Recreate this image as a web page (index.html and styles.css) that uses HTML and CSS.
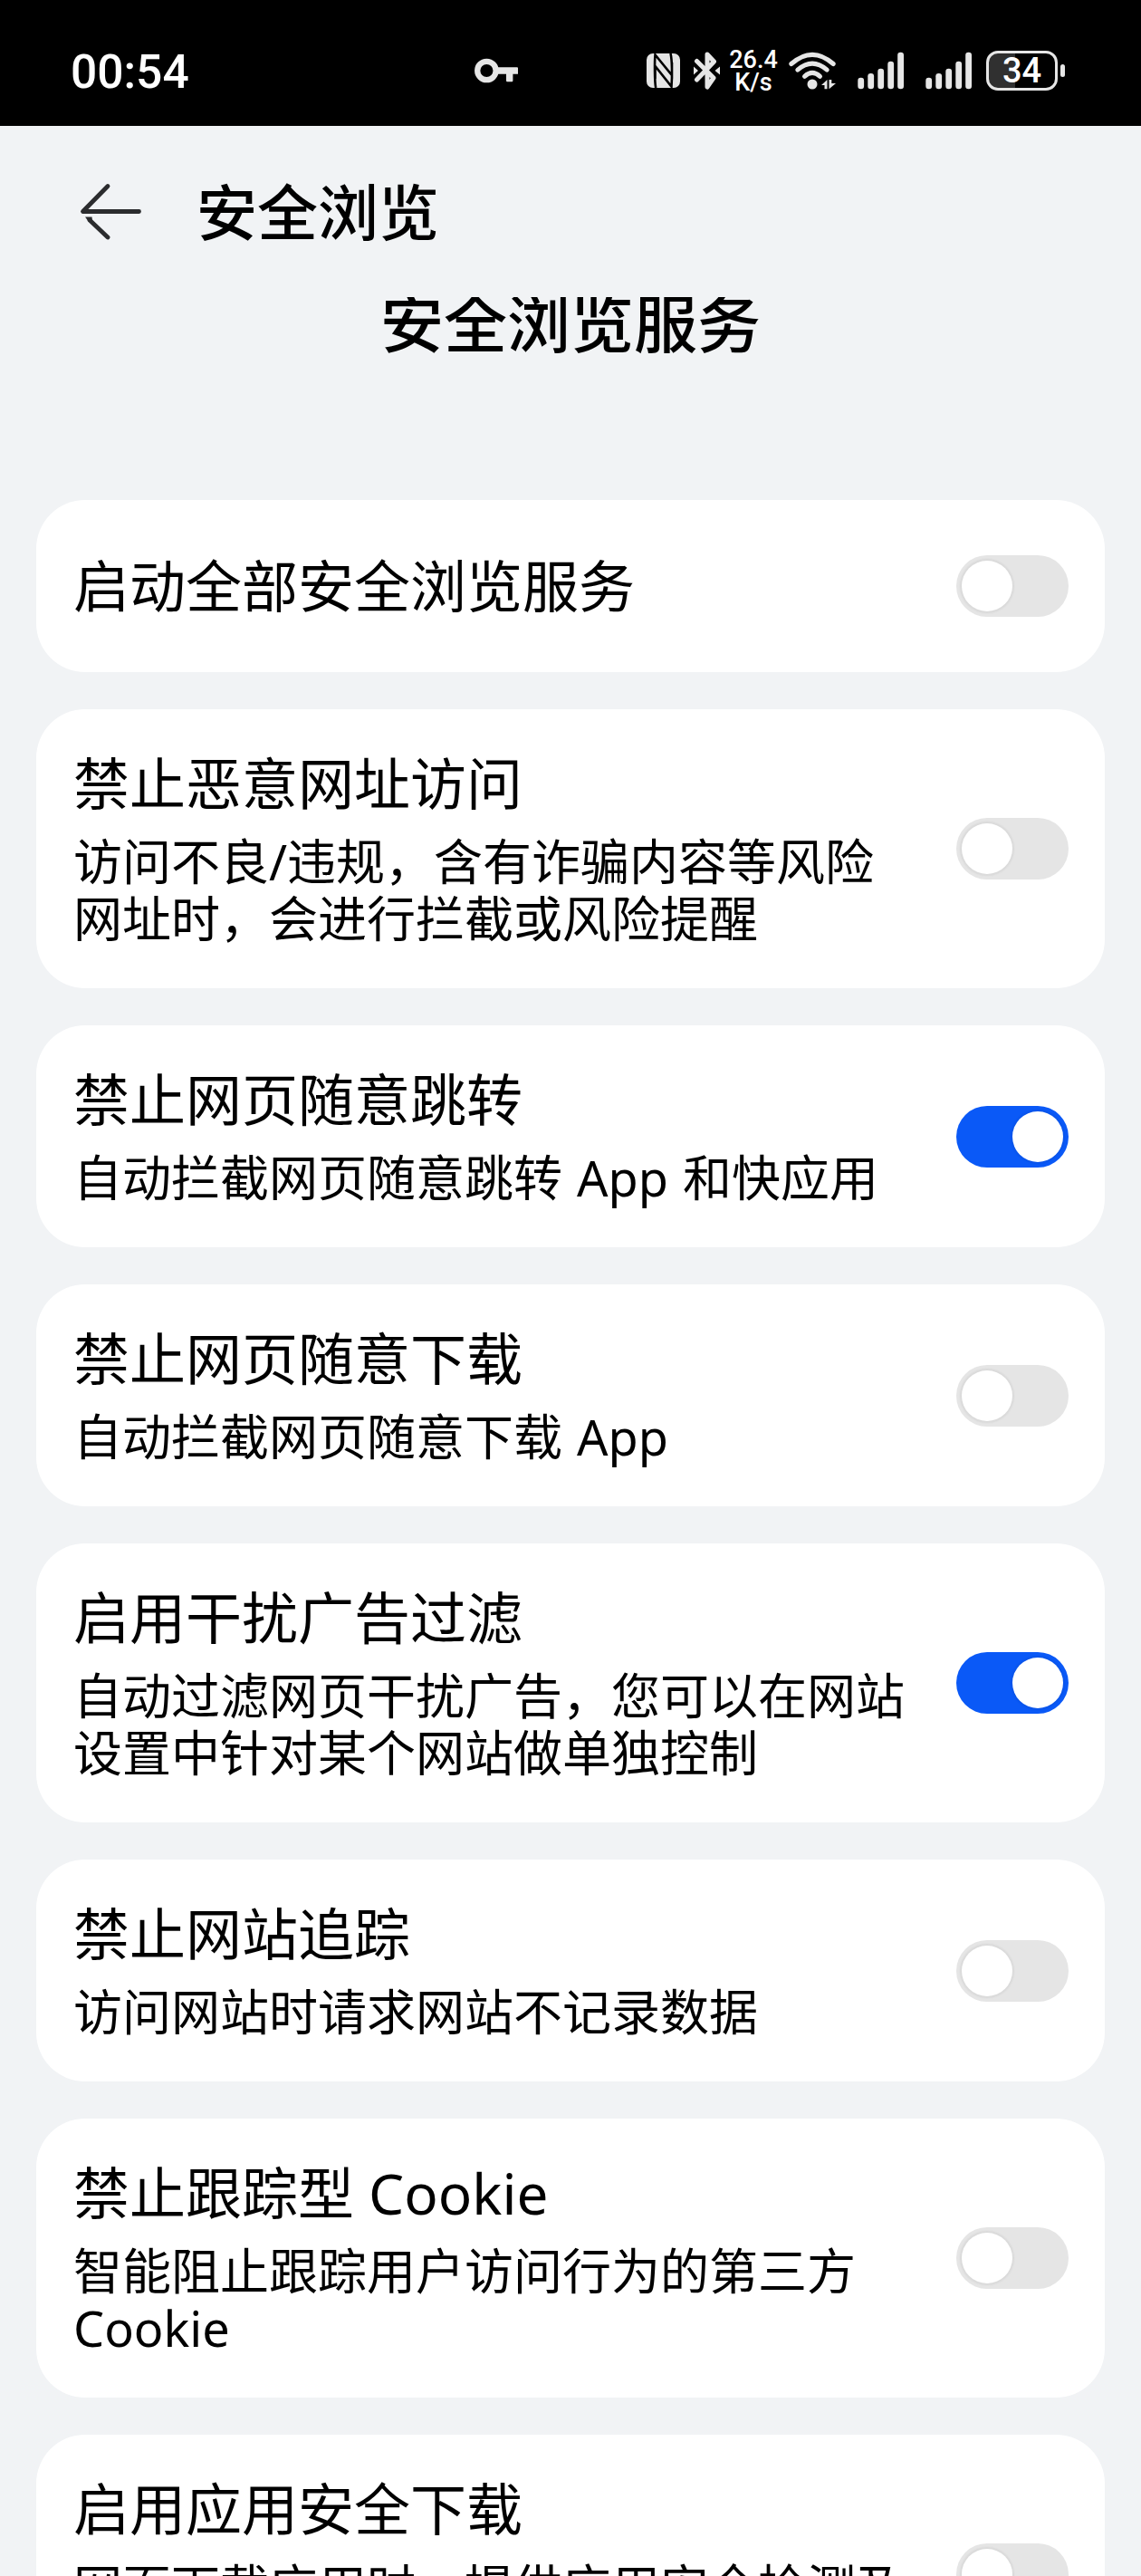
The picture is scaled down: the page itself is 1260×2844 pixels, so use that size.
FILE: index.html
```html
<!DOCTYPE html>
<html lang="zh-CN">
<head>
    <meta charset="UTF-8">
    <meta name="viewport" content="width=device-width, initial-scale=1.0">
    <title>安全浏览</title>
    <link rel="stylesheet" href="styles.css">
</head>
<body>
    <div class="status-bar">
        <span class="time">00:54</span>
        <svg class="key" width="49" height="48" viewBox="0 0 49 48">
            <circle cx="13.4" cy="24" r="10.2" fill="none" stroke="#e6e6e6" stroke-width="6.3"/>
            <path d="M24 20.3H47a1 1 0 0 1 1 1V27.7H42.4V35a1.2 1.2 0 0 1-1.2 1.2H36.2a1.2 1.2 0 0 1-1.2-1.2V27.7H24z" fill="#e6e6e6"/>
        </svg>
        <div class="status-icons">
            <svg class="nfc" width="37" height="48" viewBox="0 0 37 48">
                <rect x="0" y="5" width="37" height="38" rx="7" fill="#e6e6e6"/>
                <path d="M10.2 43C8.800 36 8.800 14 9.500 6.500L28 29V15M26.500 5C28.200 12 28.400 30 27.500 41.500L9.500 19V33" fill="none" stroke="#000" stroke-width="2.600"/>
            </svg>
            <svg class="bluetooth" width="29" height="48" viewBox="0 0 29 48">
                <path d="M3.500 13.500L22 32L15 42V28M15 20V6L22.500 14L3.500 34" fill="none" stroke="#e6e6e6" stroke-width="5" stroke-linejoin="round" stroke-linecap="round"/>
                <path d="M0 19.500V28.500L5 24zM29 19.500V28.500L23.500 24z" fill="#e6e6e6"/>
            </svg>
            <div class="speed"><span>26.4</span><span>K/s</span></div>
            <svg class="wifi" width="52" height="48" viewBox="0 0 52 48">
                <g fill="none" stroke="#e6e6e6" stroke-width="5" stroke-linecap="round">
                    <path d="M2.800 16.500Q26 -3.900 49.200 16.500"/>
                    <path d="M9.800 23.200Q26 9.100 42.200 23.200"/>
                    <path d="M17.500 30.300Q26 22.600 34.500 30.300"/>
                </g>
                <circle cx="26" cy="39" r="5.500" fill="#e6e6e6"/>
                <path d="M36 40L42.500 34V44.300H39.500V40zM44.500 34H47.300V38H52L44.500 44.300z" fill="#e6e6e6"/>
            </svg>
            <svg class="signal" width="51" height="48" viewBox="0 0 51 48">
                <g fill="#e6e6e6">
                    <rect x="0.300" y="31.700" width="6.800" height="12.600" rx="3.200"/>
                    <rect x="11.300" y="27" width="6.800" height="17.300" rx="3.200"/>
                    <rect x="22.300" y="21.700" width="6.800" height="22.600" rx="3.200"/>
                    <rect x="33.300" y="13.700" width="6.800" height="30.600" rx="3.200"/>
                    <rect x="44.200" y="3.700" width="6.800" height="40.600" rx="3.200"/>
                </g>
            </svg>
            <svg class="signal" width="51" height="48" viewBox="0 0 51 48">
                <g fill="#e6e6e6">
                    <rect x="0.300" y="31.700" width="6.800" height="12.600" rx="3.200"/>
                    <rect x="11.300" y="27" width="6.800" height="17.300" rx="3.200"/>
                    <rect x="22.300" y="21.700" width="6.800" height="22.600" rx="3.200"/>
                    <rect x="33.300" y="13.700" width="6.800" height="30.600" rx="3.200"/>
                    <rect x="44.200" y="3.700" width="6.800" height="40.600" rx="3.200"/>
                </g>
            </svg>
            <div class="battery"><span>34</span></div>
            <div class="battery-tip"></div>
        </div>
    </div>

    <header class="header">
        <svg class="back" width="72" height="64" viewBox="0 0 72 64">
            <g fill="none" stroke="#2b2c2e" stroke-width="4.800" stroke-linecap="round" stroke-linejoin="round">
                <path d="M34 3.500L6.500 31.500H68.500"/>
                <path d="M14 41L34 60"/>
            </g>
            <path d="M9 37.500H16.500L17 42L13 43z" fill="#2b2c2e"/>
        </svg>
        <h1>安全浏览</h1>
    </header>

    <h2 class="subtitle">安全浏览服务</h2>

    <main class="list">
        <div class="card">
            <div class="text">
                <h3>启动全部安全浏览服务</h3>
            </div>
            <div class="switch"></div>
        </div>
        <div class="card">
            <div class="text">
                <h3>禁止恶意网址访问</h3>
                <p>访问不良/违规，含有诈骗内容等风险网址时，会进行拦截或风险提醒</p>
            </div>
            <div class="switch"></div>
        </div>
        <div class="card">
            <div class="text">
                <h3>禁止网页随意跳转</h3>
                <p>自动拦截网页随意跳转 App 和快应用</p>
            </div>
            <div class="switch on"></div>
        </div>
        <div class="card">
            <div class="text">
                <h3>禁止网页随意下载</h3>
                <p>自动拦截网页随意下载 App</p>
            </div>
            <div class="switch"></div>
        </div>
        <div class="card">
            <div class="text">
                <h3>启用干扰广告过滤</h3>
                <p>自动过滤网页干扰广告，您可以在网站设置中针对某个网站做单独控制</p>
            </div>
            <div class="switch on"></div>
        </div>
        <div class="card">
            <div class="text">
                <h3>禁止网站追踪</h3>
                <p>访问网站时请求网站不记录数据</p>
            </div>
            <div class="switch"></div>
        </div>
        <div class="card">
            <div class="text">
                <h3>禁止跟踪型 Cookie</h3>
                <p>智能阻止跟踪用户访问行为的第三方 Cookie</p>
            </div>
            <div class="switch"></div>
        </div>
        <div class="card card-last">
            <div class="text">
                <h3>启用应用安全下载</h3>
                <p>网页下载应用时，提供应用安全检测及</p>
            </div>
            <div class="switch"></div>
        </div>
    </main>
</body>
</html>
```
FILE: styles.css
```css
* {
    box-sizing: border-box;
    margin: 0;
    padding: 0;
}
body {
    width: 1260px;
    height: 2844px;
    overflow: hidden;
    background-color: #f1f3f5;
    color: #000;
    font-family: "Noto Sans", "Noto Sans CJK SC", sans-serif;
}
svg {
    display: block;
    flex-shrink: 0;
}

/* status bar */
.status-bar {
    display: grid;
    grid-template-columns: 446px 190px auto;
    align-items: center;
    height: 139px;
    padding: 17px 0 0 78px;
    background-color: #000;
    color: #fff;
    font-family: Roboto, sans-serif;
}
.time {
    padding-top: 4px;
    font-size: 51.5px;
    font-weight: 500;
    line-height: 52px;
}
.status-icons {
    display: flex;
    align-items: center;
}
.bluetooth {
    margin-left: 15px;
}
.speed {
    display: flex;
    flex-direction: column;
    align-items: center;
    width: 52px;
    margin: 2px 13px 0 11px;
    font-size: 27px;
    font-weight: 500;
    line-height: 25.5px;
}
.signal {
    margin-left: 24px;
}
.battery {
    display: flex;
    align-items: center;
    justify-content: center;
    width: 79px;
    height: 44px;
    margin-left: 16px;
    border: 3px solid #e6e6e6;
    border-radius: 13px;
    background: linear-gradient(to right, #303030 29px, #000 29px);
    font-size: 38px;
    font-weight: 500;
    line-height: 38px;
}
.battery-tip {
    width: 5px;
    height: 14px;
    margin-left: 3px;
    border-radius: 3px;
    background-color: #e6e6e6;
}

/* header */
.header {
    display: flex;
    align-items: center;
    height: 189px;
    padding: 0 0 0 85px;
}
.header h1 {
    margin-left: 60px;
    font-size: 67px;
    font-weight: 500;
    line-height: 80px;
}
.subtitle {
    height: 224px;
    overflow: hidden;
    font-size: 70px;
    font-weight: 500;
    line-height: 58px;
    text-align: center;
}

/* settings */
.list {
    display: flex;
    flex-direction: column;
    gap: 41px;
    padding: 0 40px;
}
.card {
    display: flex;
    align-items: center;
    justify-content: space-between;
    min-height: 190px;
    padding: 46px 40px 46px 41px;
    border-radius: 54px;
    background-color: #fff;
}
.card-last {
    height: 308px;
}
.card-last .text {
    align-self: flex-start;
}
.text {
    width: 932px;
}
.text h3 {
    font-size: 62px;
    font-weight: 400;
    line-height: 73px;
}
.text p {
    padding-top: 18px;
    margin-bottom: -1px;
    font-size: 54px;
    line-height: 63px;
    word-spacing: 2px;
}
.switch {
    flex-shrink: 0;
    width: 124px;
    height: 68px;
    padding: 6px;
    border-radius: 34px;
    background-color: #e5e5e5;
}
.switch::before {
    content: "";
    display: block;
    width: 56px;
    height: 56px;
    border-radius: 50%;
    background-color: #fff;
    box-shadow: 0 0 2px 2px rgba(0, 0, 0, 0.05);
}
.switch.on {
    background-color: #0a59f7;
}
.switch.on::before {
    margin-left: auto;
}
```
